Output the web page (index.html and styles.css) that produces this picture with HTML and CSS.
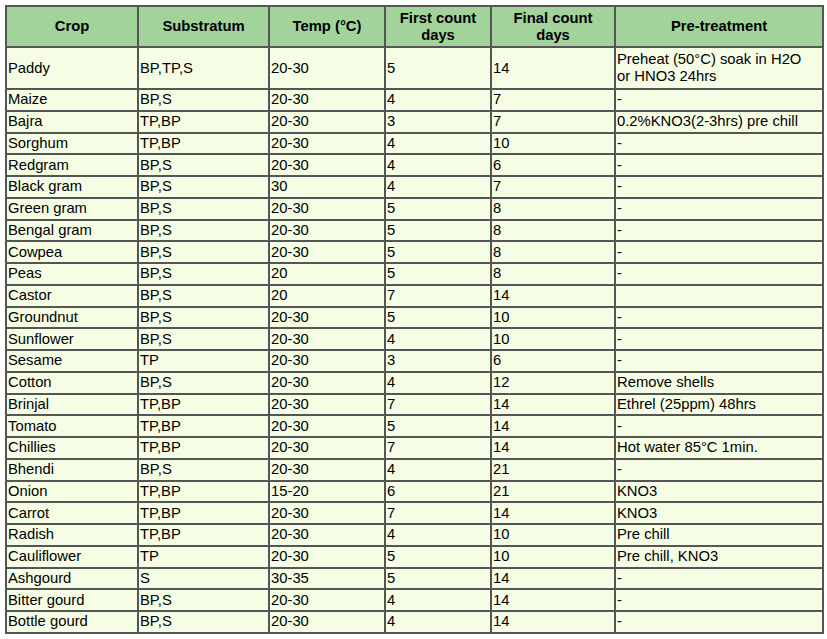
FILE: index.html
```html
<!DOCTYPE html>
<html>
<head>
<meta charset="utf-8">
<link rel="stylesheet" href="styles.css">
</head>
<body>
<table class="seed">
<colgroup>
<col class="c1"><col class="c2"><col class="c3"><col class="c4"><col class="c5"><col class="c6">
</colgroup>
<thead>
<tr class="head"><th>Crop</th><th>Substratum</th><th>Temp (°C)</th><th>First count<br>days</th><th>Final count<br>days</th><th>Pre-treatment</th></tr>
</thead>
<tbody>
<tr class="tall"><td>Paddy</td><td>BP,TP,S</td><td>20-30</td><td>5</td><td>14</td><td>Preheat (50°C) soak in H2O<br>or HNO3 24hrs</td></tr>
<tr><td>Maize</td><td>BP,S</td><td>20-30</td><td>4</td><td>7</td><td>-</td></tr>
<tr><td>Bajra</td><td>TP,BP</td><td>20-30</td><td>3</td><td>7</td><td>0.2%KNO3(2-3hrs) pre chill</td></tr>
<tr><td>Sorghum</td><td>TP,BP</td><td>20-30</td><td>4</td><td>10</td><td>-</td></tr>
<tr><td>Redgram</td><td>BP,S</td><td>20-30</td><td>4</td><td>6</td><td>-</td></tr>
<tr><td>Black gram</td><td>BP,S</td><td>30</td><td>4</td><td>7</td><td>-</td></tr>
<tr><td>Green gram</td><td>BP,S</td><td>20-30</td><td>5</td><td>8</td><td>-</td></tr>
<tr><td>Bengal gram</td><td>BP,S</td><td>20-30</td><td>5</td><td>8</td><td>-</td></tr>
<tr><td>Cowpea</td><td>BP,S</td><td>20-30</td><td>5</td><td>8</td><td>-</td></tr>
<tr><td>Peas</td><td>BP,S</td><td>20</td><td>5</td><td>8</td><td>-</td></tr>
<tr><td>Castor</td><td>BP,S</td><td>20</td><td>7</td><td>14</td><td></td></tr>
<tr><td>Groundnut</td><td>BP,S</td><td>20-30</td><td>5</td><td>10</td><td>-</td></tr>
<tr><td>Sunflower</td><td>BP,S</td><td>20-30</td><td>4</td><td>10</td><td>-</td></tr>
<tr><td>Sesame</td><td>TP</td><td>20-30</td><td>3</td><td>6</td><td>-</td></tr>
<tr><td>Cotton</td><td>BP,S</td><td>20-30</td><td>4</td><td>12</td><td>Remove shells</td></tr>
<tr><td>Brinjal</td><td>TP,BP</td><td>20-30</td><td>7</td><td>14</td><td>Ethrel (25ppm) 48hrs</td></tr>
<tr><td>Tomato</td><td>TP,BP</td><td>20-30</td><td>5</td><td>14</td><td>-</td></tr>
<tr><td>Chillies</td><td>TP,BP</td><td>20-30</td><td>7</td><td>14</td><td>Hot water 85°C 1min.</td></tr>
<tr><td>Bhendi</td><td>BP,S</td><td>20-30</td><td>4</td><td>21</td><td>-</td></tr>
<tr><td>Onion</td><td>TP,BP</td><td>15-20</td><td>6</td><td>21</td><td>KNO3</td></tr>
<tr><td>Carrot</td><td>TP,BP</td><td>20-30</td><td>7</td><td>14</td><td>KNO3</td></tr>
<tr><td>Radish</td><td>TP,BP</td><td>20-30</td><td>4</td><td>10</td><td>Pre chill</td></tr>
<tr><td>Cauliflower</td><td>TP</td><td>20-30</td><td>5</td><td>10</td><td>Pre chill, KNO3</td></tr>
<tr><td>Ashgourd</td><td>S</td><td>30-35</td><td>5</td><td>14</td><td>-</td></tr>
<tr><td>Bitter gourd</td><td>BP,S</td><td>20-30</td><td>4</td><td>14</td><td>-</td></tr>
<tr><td>Bottle gourd</td><td>BP,S</td><td>20-30</td><td>4</td><td>14</td><td>-</td></tr>
</tbody>
</table>
</body>
</html>
```
FILE: styles.css
```css
html, body {
  margin: 0;
  padding: 0;
  background: #ffffff;
}
body {
  padding: 5px;
  font-family: "Liberation Sans", Arial, sans-serif;
  font-size: 14.8px;
  color: #000;
}
.seed {
  border-collapse: collapse;
  table-layout: fixed;
  width: 817px;
  border: 2px solid #444;
}
.c1 { width: 132px; }
.c2 { width: 131px; }
.c3 { width: 116px; }
.c4 { width: 106px; }
.c5 { width: 124px; }
.c6 { width: 208px; }
.seed th, .seed td {
  border: 2px solid #555;
  padding: 0 1px;
  vertical-align: middle;
}
.seed th {
  background: #a2d39b;
  font-weight: bold;
  text-align: center;
  line-height: 17px;
  color: #000;
}
.seed td {
  background: #f5fde4;
  text-align: left;
  line-height: 17px;
}
.head { height: 41px; }
.seed tbody tr { height: 21.76px; }
.seed tbody tr.tall { height: 42px; }
```
